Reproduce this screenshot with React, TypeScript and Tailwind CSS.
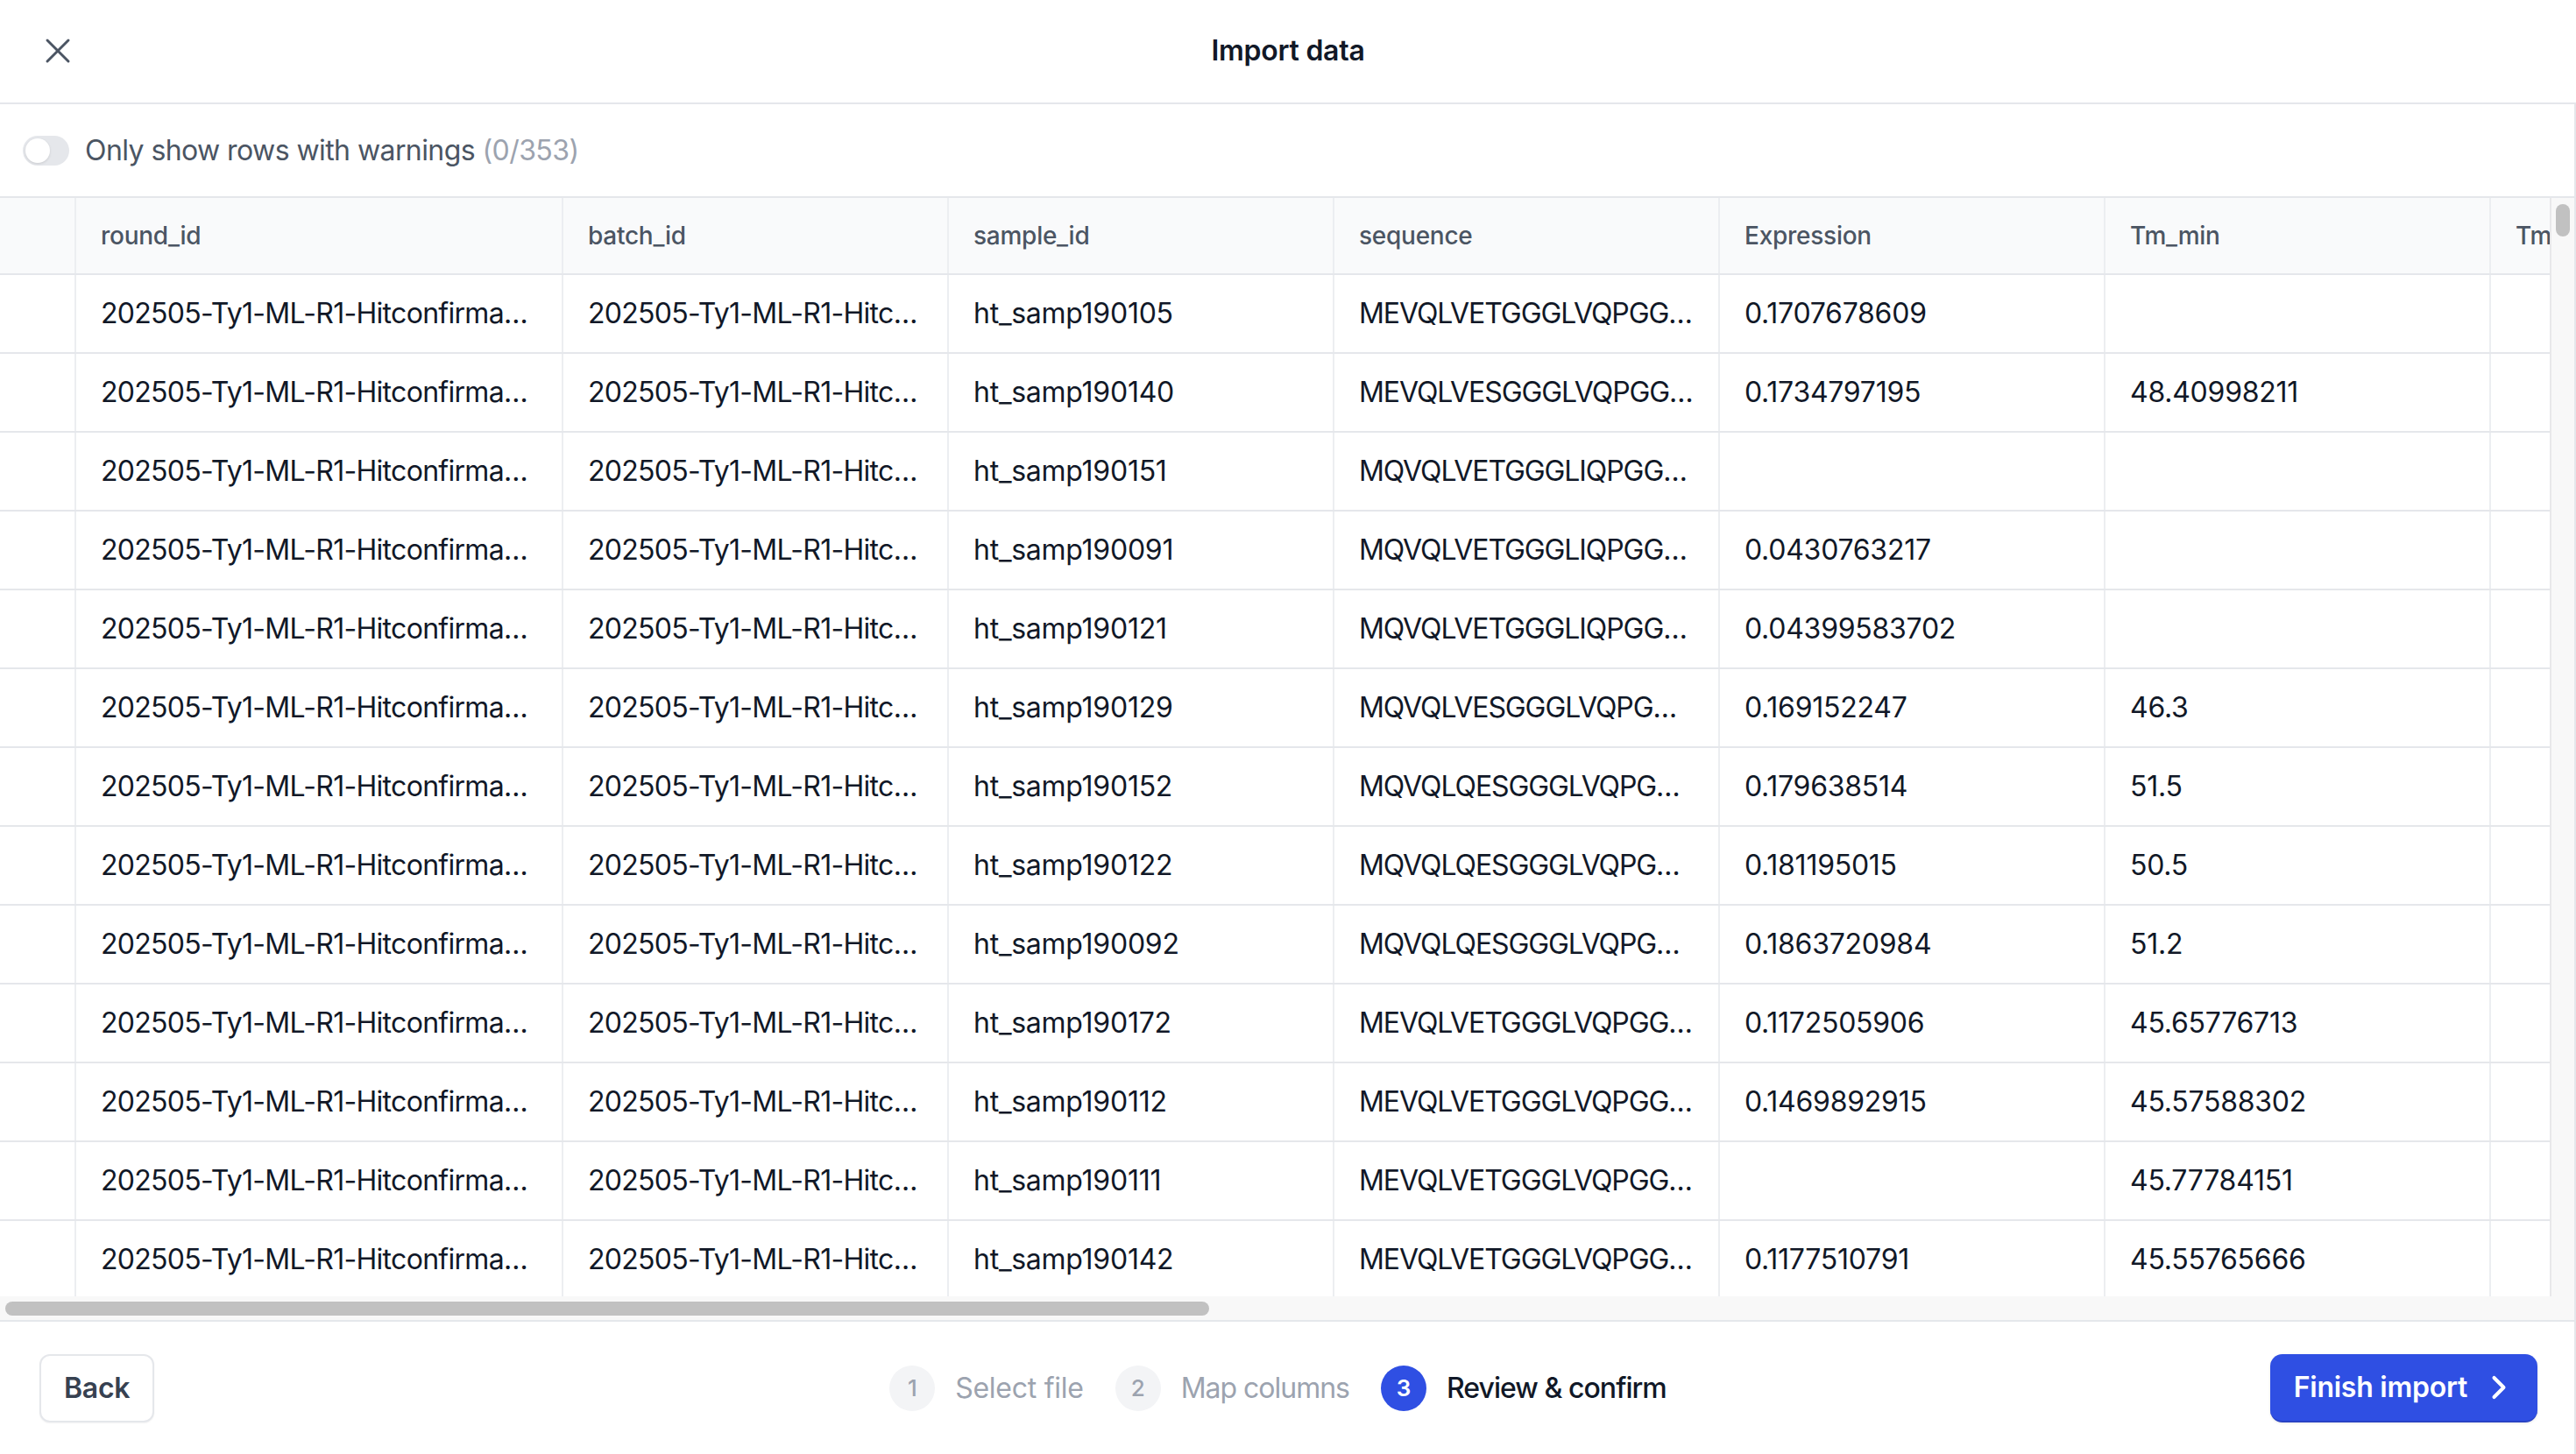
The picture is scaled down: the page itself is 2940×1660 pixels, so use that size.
import React from "react";

const rows: [string, string, string, string][] = [
  ["ht_samp190105", "MEVQLVETGGGLVQPGG…", "0.1707678609", ""],
  ["ht_samp190140", "MEVQLVESGGGLVQPGG…", "0.1734797195", "48.40998211"],
  ["ht_samp190151", "MQVQLVETGGGLIQPGG…", "", ""],
  ["ht_samp190091", "MQVQLVETGGGLIQPGG…", "0.0430763217", ""],
  ["ht_samp190121", "MQVQLVETGGGLIQPGG…", "0.04399583702", ""],
  ["ht_samp190129", "MQVQLVESGGGLVQPG…", "0.169152247", "46.3"],
  ["ht_samp190152", "MQVQLQESGGGLVQPG…", "0.179638514", "51.5"],
  ["ht_samp190122", "MQVQLQESGGGLVQPG…", "0.181195015", "50.5"],
  ["ht_samp190092", "MQVQLQESGGGLVQPG…", "0.1863720984", "51.2"],
  ["ht_samp190172", "MEVQLVETGGGLVQPGG…", "0.1172505906", "45.65776713"],
  ["ht_samp190112", "MEVQLVETGGGLVQPGG…", "0.1469892915", "45.57588302"],
  ["ht_samp190111", "MEVQLVETGGGLVQPGG…", "", "45.77784151"],
  ["ht_samp190142", "MEVQLVETGGGLVQPGG…", "0.1177510791", "45.55765666"],
];

const headers = ["round_id", "batch_id", "sample_id", "sequence", "Expression", "Tm_min", "Tm_max"];

function HeaderCell({ w, children }: { w: string; children?: React.ReactNode }) {
  return (
    <div className={`${w} shrink-0 h-full flex items-center pl-[28px] border-r-2 border-[#eceef1] overflow-hidden whitespace-nowrap`}>
      {children}
    </div>
  );
}

function Cell({ w, children, t = "" }: { w: string; children?: React.ReactNode; t?: string }) {
  return (
    <div className={`${w} ${t} shrink-0 h-full flex items-center pl-[28px] border-r-2 border-[#eceef1] overflow-hidden whitespace-nowrap`}>
      {children}
    </div>
  );
}

export default function App() {
  return (
    <div className="w-[2940px] h-[1660px] flex flex-col bg-white font-['Inter','Liberation_Sans',sans-serif] tracking-[-0.016em] text-[#111827] overflow-hidden">
      {/* Header */}
      <div className="h-[119px] shrink-0 border-b-2 border-[#e5e7eb] grid grid-cols-[1fr_auto_1fr] items-center">
        <div className="pl-[42px] flex items-center -mt-[2px]">
          <svg width="48" height="48" viewBox="0 0 24 24" fill="none" stroke="#4b5563" strokeWidth="1.5" strokeLinecap="round" strokeLinejoin="round">
            <path d="M18 6 6 18" />
            <path d="m6 6 12 12" />
          </svg>
        </div>
        <div className="text-[32px] font-semibold text-[#111827] -mt-[2px]">Import data</div>
        <div />
      </div>

      {/* Body */}
      <div className="flex-1 min-h-0 flex flex-col border-r-2 border-[#e5e7eb]">
        {/* Toggle row */}
        <div className="h-[107px] shrink-0 border-b-2 border-[#e5e7eb] flex items-center pl-[26px] gap-[18px]">
          <div className="w-[53px] h-[34px] rounded-full bg-[#e5e7eb] flex items-center px-[3px]">
            <div className="w-[28px] h-[28px] rounded-full bg-white shadow-[0_1px_3px_rgba(0,0,0,0.12)]" />
          </div>
          <div className="text-[32px] text-[#4b5563] tracking-[-0.018em]">
            Only show rows with warnings <span className="text-[#9ca3af]">(0/353)</span>
          </div>
        </div>

        {/* Table area */}
        <div className="flex-1 min-h-0 flex flex-col">
          <div className="flex-1 min-h-0 flex">
            <div className="flex-1 min-w-0 overflow-hidden">
              <div className="w-max">
                <div className="h-[88px] flex bg-[#f9fafb] border-b-2 border-[#e5e7eb] text-[28px] font-medium text-[#4b5563]">
                  <HeaderCell w="w-[87px]" />
                  <HeaderCell w="w-[556px]">{headers[0]}</HeaderCell>
                  <HeaderCell w="w-[440px]">{headers[1]}</HeaderCell>
                  <HeaderCell w="w-[440px]">{headers[2]}</HeaderCell>
                  <HeaderCell w="w-[440px]">{headers[3]}</HeaderCell>
                  <HeaderCell w="w-[440px]">{headers[4]}</HeaderCell>
                  <HeaderCell w="w-[440px]">{headers[5]}</HeaderCell>
                  <HeaderCell w="w-[440px]">{headers[6]}</HeaderCell>
                </div>
                {rows.map((r, i) => (
                  <div key={i} className="h-[90px] flex border-b-2 border-[#e5e7eb] text-[32px] text-[#111827]">
                    <Cell w="w-[87px]" />
                    <Cell w="w-[556px]" t="tracking-[-0.022em]">202505-Ty1-ML-R1-Hitconfirma…</Cell>
                    <Cell w="w-[440px]" t="tracking-[-0.022em]">202505-Ty1-ML-R1-Hitc…</Cell>
                    <Cell w="w-[440px]">{r[0]}</Cell>
                    <Cell w="w-[440px]" t="tracking-[-0.034em]">{r[1]}</Cell>
                    <Cell w="w-[440px]">{r[2]}</Cell>
                    <Cell w="w-[440px]">{r[3]}</Cell>
                    <Cell w="w-[440px]" />
                  </div>
                ))}
              </div>
            </div>
            {/* vertical scrollbar */}
            <div className="w-[28px] shrink-0 bg-[#f8f8f8] border-l-2 border-[#e8e8ea] flex justify-center pt-[7px]">
              <div className="w-[16px] h-[37px] rounded-full bg-[#c1c1c1]" />
            </div>
          </div>
          {/* horizontal scrollbar */}
          <div className="h-[29px] shrink-0 bg-[#f8f8f8] border-b-2 border-[#e5e7eb] flex items-center pl-[6px]">
            <div className="w-[1374px] h-[16px] rounded-full bg-[#c1c1c1]" />
          </div>
        </div>

        {/* Footer */}
        <div className="h-[151px] shrink-0 grid grid-cols-[1fr_auto_1fr] items-center pl-[45px] pr-[42px]">
          <div className="flex">
            <button className="h-[78px] px-[26px] rounded-[12px] border-2 border-[#e5e7eb] bg-white shadow-[0_1px_2px_rgba(0,0,0,0.05)] text-[32px] font-semibold text-[#374151]">
              Back
            </button>
          </div>
          <div className="flex items-center pr-[24px]">
            <div className="flex items-center gap-[23px]">
              <div className="w-[52px] h-[52px] rounded-full bg-[#f3f4f6] flex items-center justify-center text-[26px] font-medium text-[#9ca3af]">1</div>
              <span className="text-[32px] text-[#9ca3af]">Select file</span>
            </div>
            <div className="flex items-center gap-[23px] ml-[36px]">
              <div className="w-[52px] h-[52px] rounded-full bg-[#f3f4f6] flex items-center justify-center text-[26px] font-medium text-[#9ca3af]">2</div>
              <span className="text-[32px] text-[#9ca3af] tracking-[-0.032em]">Map columns</span>
            </div>
            <div className="flex items-center gap-[23px] ml-[36px]">
              <div className="w-[52px] h-[52px] rounded-full bg-[#2f4fe3] flex items-center justify-center text-[26px] font-semibold text-white">3</div>
              <span className="text-[32px] font-medium text-[#111827] tracking-[-0.03em]">Review &amp; confirm</span>
            </div>
          </div>
          <div className="flex justify-end">
            <button className="h-[78px] pl-[27px] pr-[22px] rounded-[14px] bg-[#2f4fe3] border-b-2 border-[#2842c4] shadow-[0_1px_3px_rgba(0,0,0,0.1)] flex items-center gap-[14px] text-[32px] font-semibold text-white">
              <span>Finish import</span>
              <svg width="44" height="44" viewBox="0 0 24 24" fill="none" stroke="white" strokeWidth="2.2" strokeLinecap="round" strokeLinejoin="round">
                <path d="m9 18 6-6-6-6" />
              </svg>
            </button>
          </div>
        </div>
      </div>
    </div>
  );
}
